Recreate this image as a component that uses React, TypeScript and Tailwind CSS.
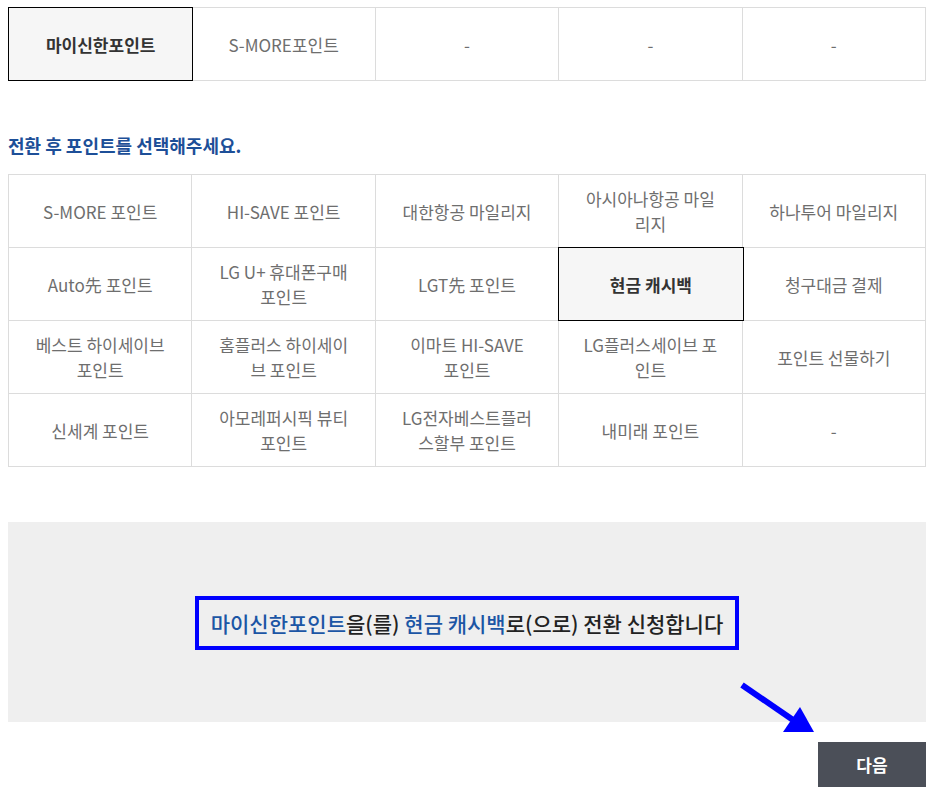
import React from 'react';

const fromPoints = ['마이신한포인트', 'S-MORE포인트', '-', '-', '-'];

const toPoints = [
  'S-MORE 포인트',
  'HI-SAVE 포인트',
  '대한항공 마일리지',
  '아시아나항공 마일리지',
  '하나투어 마일리지',
  'Auto先 포인트',
  'LG U+ 휴대폰구매 포인트',
  'LGT先 포인트',
  '현금 캐시백',
  '청구대금 결제',
  '베스트 하이세이브 포인트',
  '홈플러스 하이세이브 포인트',
  '이마트 HI-SAVE 포인트',
  'LG플러스세이브 포인트',
  '포인트 선물하기',
  '신세계 포인트',
  '아모레퍼시픽 뷰티 포인트',
  'LG전자베스트플러스할부 포인트',
  '내미래 포인트',
  '-',
];

function Cell({ label, active }: { label: string; active?: boolean }) {
  const keep = label.includes('HI-SAVE 포인트') && label.startsWith('이마트');
  return (
    <div
      className={
        active
          ? 'relative z-10 -m-px flex h-[74px] items-center justify-center border border-black bg-[#f6f6f6] px-[22px] text-center text-[17px] font-bold leading-[25px] text-[#333]'
          : 'flex h-[73px] items-center justify-center border-b border-r border-[#dcdcdc] px-[22px] text-center text-[17px] leading-[25px] text-[#6e6e6e]'
      }
    >
      <span className={keep ? 'break-keep' : ''}>{label}</span>
    </div>
  );
}

export default function App() {
  const from = '마이신한포인트';
  const to = '현금 캐시백';

  return (
    <div
      className="relative mx-2 w-[918px] bg-white pt-[7px] pb-[18px]"
      style={{ fontFamily: '"Noto Sans CJK KR", "Noto Sans", sans-serif' }}
    >
      {/* 전환 전 포인트 */}
      <div className="grid grid-cols-5 border-l border-t border-[#dcdcdc]">
        {fromPoints.map((p, i) => (
          <Cell key={i} label={p} active={p === from} />
        ))}
      </div>

      <h3 className="mt-[52px] text-[18px] font-bold leading-[24px] text-[#1d4f98]">
        전환 후 포인트를 선택해주세요.
      </h3>

      {/* 전환 후 포인트 */}
      <div className="mt-[17px] grid grid-cols-5 border-l border-t border-[#dcdcdc]">
        {toPoints.map((p, i) => (
          <Cell key={i} label={p} active={p === to} />
        ))}
      </div>

      {/* 신청 요약 */}
      <div className="mt-[55px] flex h-[200px] items-center justify-center bg-[#efefef]">
        <div className="mt-[2px] border-4 border-[#0000ff] px-[12px] py-[8px] text-[21px] font-medium leading-[30px] text-[#222]">
          <span className="text-[#1c56a5]">{from}</span>을(를){' '}
          <span className="text-[#1c56a5]">{to}</span>로(으로) 전환 신청합니다
        </div>
      </div>

      <div className="mt-5 flex justify-end">
        <button className="h-[45px] w-[108px] bg-[#4b4f58] text-[17px] font-bold text-white">
          다음
        </button>
      </div>

      {/* 안내 화살표 */}
      <svg
        className="pointer-events-none absolute left-[724px] top-[676px]"
        width="90"
        height="66"
        viewBox="0 0 90 66"
      >
        <line x1="10" y1="9" x2="64" y2="46" stroke="#0000ff" strokeWidth="6" />
        <polygon points="82,56 51,56 68,31" fill="#0000ff" />
      </svg>
    </div>
  );
}
